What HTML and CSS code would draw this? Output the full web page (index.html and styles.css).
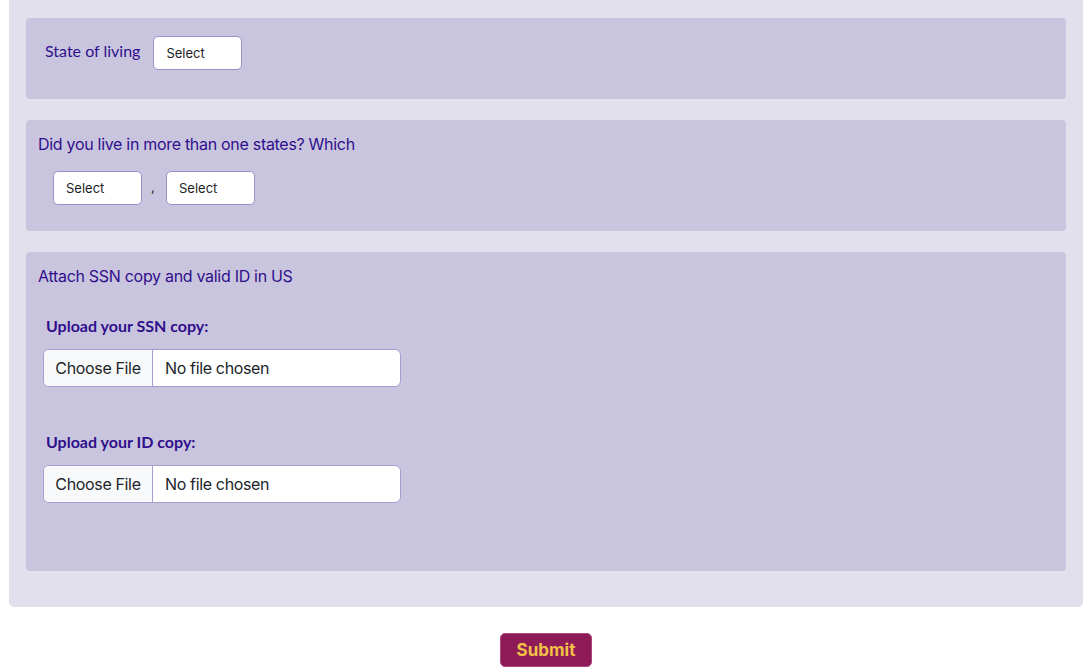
FILE: index.html
```html
<!DOCTYPE html>
<html>
<head>
<meta charset="utf-8">
<link rel="stylesheet" href="styles.css">
</head>
<body>
<div class="outer">
  <section class="card card-state">
    <span class="lato-label">State of living</span>
    <div class="select">Select</div>
  </section>
  <section class="card card-multi">
    <div class="heading">Did you live in more than one states? Which</div>
    <div class="select-row">
      <div class="select">Select</div>
      <span class="comma">,</span>
      <div class="select">Select</div>
    </div>
  </section>
  <section class="card card-attach">
    <div class="heading">Attach SSN copy and valid ID in US</div>
    <div class="upload first">
      <div class="upload-label">Upload your SSN copy:</div>
      <div class="file"><span class="file-btn">Choose File</span><span class="file-name">No file chosen</span></div>
    </div>
    <div class="upload">
      <div class="upload-label">Upload your ID copy:</div>
      <div class="file"><span class="file-btn">Choose File</span><span class="file-name">No file chosen</span></div>
    </div>
  </section>
</div>
<div class="submit-row">
  <button class="submit">Submit</button>
</div>
</body>
</html>
```

FILE: styles.css
```css
* { box-sizing: border-box; }
html, body { margin: 0; padding: 0; background: #ffffff; }
body { font-family: Inter, "Liberation Sans", sans-serif; color: #2f0f8c; }

.outer {
  margin: 0 9px;
  background: #e2e0ed;
  border-radius: 0 0 5px 5px;
  padding: 18px 17px 36px 17px;
  display: flex;
  flex-direction: column;
  gap: 21px;
}

.card {
  background: #cac5de;
  border-radius: 4px;
}

.card-state {
  height: 81px;
  padding: 18px 19px 0 19px;
  display: flex;
  align-items: flex-start;
  gap: 13px;
}
.lato-label {
  font-family: Lato, sans-serif;
  font-size: 16px;
  line-height: 29px;
  color: #300f8f;
}

.select {
  width: 89px;
  height: 34px;
  background: #ffffff;
  border: 1px solid #9d90c9;
  border-radius: 5px;
  font-family: Inter, "Liberation Sans", sans-serif;
  font-size: 13px;
  color: #1d1d1f;
  padding-left: 12px;
  line-height: 32px;
}

.heading {
  font-size: 16px;
  line-height: 24px;
  color: #2f0f8c;
  letter-spacing: -0.3px;
}

.card-multi {
  height: 111px;
  padding: 12px 12px 0 12px;
}
.select-row {
  margin-top: 15px;
  margin-left: 15px;
  display: flex;
  align-items: center;
  gap: 9px;
}
.comma {
  font-size: 13px;
  color: #1d1d1f;
  width: 6px;
  margin-top: -3px;
}

.card-attach {
  height: 319px;
  padding: 12px 12px 0 12px;
}
.upload { margin-left: 5px; }
.upload.first { margin-top: 27px; }
.upload + .upload { margin-top: 44px; }
.upload-label {
  font-family: Lato, sans-serif;
  font-weight: 700;
  font-size: 16px;
  line-height: 22px;
  margin-left: 3px;
  color: #2f0f8c;
}
.file {
  margin-top: 12px;
  width: 358px;
  height: 38px;
  display: flex;
  border: 1px solid #a89ccf;
  border-radius: 6px;
  background: #ffffff;
  overflow: hidden;
  font-size: 16px;
  color: #212529;
  letter-spacing: -0.35px;
}
.file-btn {
  width: 109px;
  background: #f8f9fa;
  border-right: 1px solid #a89ccf;
  display: flex;
  align-items: center;
  justify-content: center;
}
.file-name {
  display: flex;
  align-items: center;
  padding-left: 12px;
}

.submit-row {
  display: flex;
  justify-content: center;
  padding-top: 26px;
}
.submit {
  width: 92px;
  height: 34px;
  background: #8e1b57;
  border: 1px solid #a9477a;
  border-radius: 5px;
  color: #f2c247;
  font-family: Inter, "Liberation Sans", sans-serif;
  font-weight: 700;
  font-size: 17px;
  padding: 0;
}
```
